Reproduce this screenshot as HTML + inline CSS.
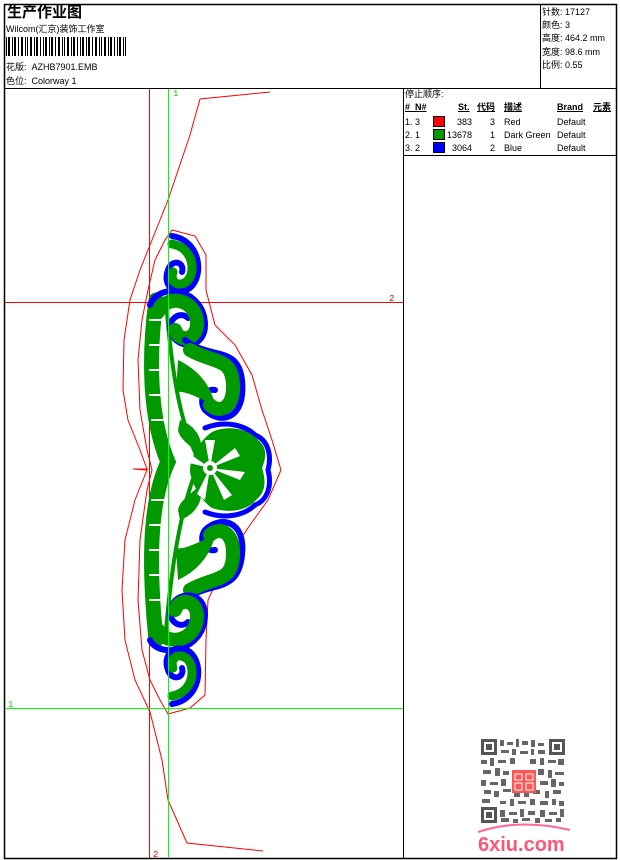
<!DOCTYPE html>
<html><head><meta charset="utf-8"><style>
body{margin:0;width:620px;height:860px;background:#fff;position:relative;overflow:hidden;font-family:"Liberation Sans","Noto Sans CJK SC",sans-serif;color:#000}
.t{position:absolute;font-size:9px;white-space:nowrap;line-height:11px}
svg{position:absolute;left:0;top:0}
</style></head><body>
<svg width="620" height="860" viewBox="0 0 620 860">
<rect x="4.5" y="4.5" width="612" height="854" fill="none" stroke="#000" stroke-width="1.5"/>
<line x1="4" y1="88.5" x2="617" y2="88.5" stroke="#000"/>
<line x1="540.5" y1="4" x2="540.5" y2="88" stroke="#000"/>
<line x1="403.5" y1="88" x2="403.5" y2="859" stroke="#000"/>
<line x1="403" y1="155.5" x2="617" y2="155.5" stroke="#000"/>
<g fill="#000">
<rect x="6" y="37" width="1" height="19"/><rect x="8" y="37" width="2" height="19"/><rect x="12" y="37" width="1" height="19"/><rect x="14" y="37" width="2" height="19"/><rect x="18" y="37" width="1" height="19"/><rect x="21" y="37" width="2" height="19"/><rect x="25" y="37" width="1" height="19"/><rect x="27" y="37" width="1" height="19"/><rect x="30" y="37" width="2" height="19"/><rect x="34" y="37" width="1" height="19"/><rect x="36" y="37" width="2" height="19"/><rect x="40" y="37" width="1" height="19"/><rect x="43" y="37" width="1" height="19"/><rect x="45" y="37" width="2" height="19"/><rect x="49" y="37" width="1" height="19"/><rect x="51" y="37" width="2" height="19"/><rect x="55" y="37" width="1" height="19"/><rect x="58" y="37" width="2" height="19"/><rect x="62" y="37" width="1" height="19"/><rect x="64" y="37" width="1" height="19"/><rect x="67" y="37" width="2" height="19"/><rect x="71" y="37" width="1" height="19"/><rect x="73" y="37" width="2" height="19"/><rect x="77" y="37" width="1" height="19"/><rect x="80" y="37" width="1" height="19"/><rect x="82" y="37" width="2" height="19"/><rect x="86" y="37" width="1" height="19"/><rect x="88" y="37" width="2" height="19"/><rect x="92" y="37" width="1" height="19"/><rect x="95" y="37" width="2" height="19"/><rect x="99" y="37" width="1" height="19"/><rect x="101" y="37" width="1" height="19"/><rect x="104" y="37" width="2" height="19"/><rect x="108" y="37" width="1" height="19"/><rect x="110" y="37" width="2" height="19"/><rect x="114" y="37" width="1" height="19"/><rect x="117" y="37" width="1" height="19"/><rect x="119" y="37" width="2" height="19"/><rect x="123" y="37" width="1" height="19"/><rect x="125" y="37" width="1" height="19"/>
</g>
<line x1="149.5" y1="89" x2="149.5" y2="858" stroke="#f00"/>
<line x1="5" y1="302.5" x2="403" y2="302.5" stroke="#f00"/>
<polyline fill="none" stroke="#f00" stroke-width="1" points="270,92 200,99 190,135 168,200 150,245 140,270 130,300 124,340 123,390 128,420 140,450 147,469 133,469 147,470 135,500 125,540 122,590 125,640 135,680 150,712 162,760 168,800 187,843 225,847 263,851"/>
<polyline fill="none" stroke="#f00" stroke-width="1" points="172,230 195,236 206,255 206,290 215,325 235,345 252,375 262,410 272,440 281,470 268,500 250,525 230,555 215,585 208,600 206,640 205,695 190,708 168,714 160,700 150,680 142,650 138,600 140,540 147,490 152,470 147,450 140,410 138,360 142,320 148,290 155,260 165,240 172,230"/>
<g fill="none" stroke-linecap="round">
<path d="M156,300 C148,360 150,420 168,462 C150,500 148,560 156,640" stroke="#090" stroke-width="15"/>
<path d="M150,320 L162,320 L162,330 M150,345 L162,345 L162,355 M150,370 L162,370 L162,380 M150,395 L164,395 L164,405 M152,420 L166,420 M152,500 L166,500 M150,525 L162,525 L162,535 M150,550 L162,550 L162,560 M150,575 L162,575 L162,585 M150,600 L162,600 L162,610" stroke="#fff" stroke-width="2"/>
<path d="M166,300 C172,380 182,430 200,462 C182,500 172,560 166,630" stroke="#090" stroke-width="4"/>
<path d="M172,236 C200,240 205,275 190,288 C175,298 162,285 168,270 C172,258 185,262 182,272" stroke="#00f" stroke-width="6"/>
<path d="M172,244 C195,248 196,275 186,282 C176,288 170,280 173,272" stroke="#090" stroke-width="9"/>
<path d="M150,305 C160,280 205,290 205,325 C205,348 180,350 172,335 C165,320 180,310 188,318" stroke="#00f" stroke-width="6"/>
<path d="M158,312 C168,292 198,300 197,325 C196,340 180,343 175,330" stroke="#090" stroke-width="14"/>
<path d="M185,340 C210,360 238,345 242,380 C246,420 220,425 205,410 C198,400 205,388 215,390" stroke="#00f" stroke-width="6"/>
<path d="M190,350 C215,364 232,357 233,385 C234,410 218,413 210,405" stroke="#090" stroke-width="14"/>
<path d="M185,600 C210,580 238,595 242,555 C246,520 220,515 205,530 C198,540 205,552 215,550" stroke="#00f" stroke-width="6"/>
<path d="M190,590 C215,576 232,583 233,555 C234,530 218,527 210,535" stroke="#090" stroke-width="14"/>
<path d="M150,640 C160,660 205,650 205,615 C205,592 180,590 172,605 C165,620 180,630 188,622" stroke="#00f" stroke-width="6"/>
<path d="M158,630 C168,648 198,640 197,615 C196,600 180,597 175,610" stroke="#090" stroke-width="14"/>
<path d="M172,704 C200,700 205,665 190,652 C175,642 162,655 168,670 C172,682 185,678 182,668" stroke="#00f" stroke-width="6"/>
<path d="M172,696 C195,692 196,665 186,658 C176,652 170,660 173,668" stroke="#090" stroke-width="9"/>
<path d="M205,428 C225,420 245,425 255,435 C268,440 272,455 268,470 C272,485 268,500 255,505 C245,515 225,520 205,512" stroke="#00f" stroke-width="5"/>
</g>
<line x1="168.5" y1="89" x2="168.5" y2="858" stroke="#0f0"/>
<line x1="5" y1="708.5" x2="403" y2="708.5" stroke="#0f0"/>
<text x="173" y="96" font-size="9" fill="#0c0" font-family="Liberation Mono">1</text>
<text x="8" y="707" font-size="9" fill="#0c0" font-family="Liberation Mono">1</text>
<text x="389" y="301" font-size="9" fill="#d00" font-family="Liberation Mono">2</text>
<text x="153" y="857" font-size="9" fill="#d00" font-family="Liberation Mono">2</text>
<g fill="#090">
<path d="M212,432 C230,424 250,430 258,440 C268,448 266,458 262,468 C266,480 266,492 256,500 C248,510 230,514 212,508 C200,500 190,480 190,470 C190,458 200,440 212,432 Z"/>
<path d="M178,360 C195,368 210,382 215,405 C198,398 185,390 176,392 Z"/>
<path d="M178,580 C195,572 210,558 215,535 C198,542 185,550 176,548 Z"/>
<path d="M180,420 C195,425 205,440 200,455 C190,445 180,440 178,430 Z"/>
<path d="M180,520 C195,515 205,500 200,485 C190,495 180,500 178,510 Z"/>
</g>
<g fill="#fff">
<path d="M210,468 L205,440 L215,440 Z M210,468 L235,448 L240,456 Z M210,468 L245,472 L240,480 Z M210,468 L232,495 L224,500 Z M210,468 L205,500 L197,494 Z M210,468 L185,462 L190,454 Z"/>
<circle cx="210" cy="468" r="7"/>
</g>
<circle cx="210" cy="468" r="3" fill="#090"/>
<g fill="#555">
<rect x="481" y="739" width="16" height="16"/><rect x="549" y="739" width="16" height="16"/><rect x="481" y="807" width="16" height="16"/>
</g>
<g fill="#fff"><rect x="484" y="742" width="10" height="10"/><rect x="552" y="742" width="10" height="10"/><rect x="484" y="810" width="10" height="10"/></g>
<g fill="#555"><rect x="486" y="744" width="6" height="6"/><rect x="554" y="744" width="6" height="6"/><rect x="486" y="812" width="6" height="6"/></g>
<g fill="#666">
<rect x="500" y="740" width="4" height="6"/><rect x="507" y="742" width="6" height="3"/><rect x="516" y="739" width="3" height="8"/><rect x="522" y="741" width="6" height="4"/><rect x="531" y="740" width="4" height="7"/><rect x="538" y="743" width="6" height="3"/>
<rect x="501" y="750" width="8" height="3"/><rect x="512" y="749" width="4" height="6"/><rect x="520" y="751" width="8" height="3"/><rect x="531" y="749" width="3" height="6"/><rect x="538" y="750" width="7" height="4"/>
<rect x="481" y="760" width="6" height="4"/><rect x="490" y="758" width="4" height="8"/><rect x="498" y="760" width="8" height="3"/><rect x="510" y="758" width="5" height="6"/><rect x="530" y="759" width="6" height="5"/><rect x="540" y="758" width="4" height="7"/><rect x="548" y="760" width="8" height="3"/><rect x="558" y="759" width="6" height="6"/>
<rect x="483" y="770" width="8" height="4"/><rect x="495" y="768" width="5" height="8"/><rect x="503" y="771" width="6" height="4"/><rect x="538" y="769" width="6" height="6"/><rect x="548" y="770" width="4" height="8"/><rect x="555" y="772" width="9" height="3"/>
<rect x="481" y="780" width="5" height="6"/><rect x="490" y="782" width="8" height="3"/><rect x="501" y="779" width="5" height="7"/><rect x="540" y="781" width="8" height="4"/><rect x="551" y="779" width="5" height="8"/><rect x="559" y="782" width="5" height="4"/>
<rect x="484" y="790" width="7" height="4"/><rect x="494" y="791" width="5" height="6"/><rect x="503" y="789" width="8" height="3"/><rect x="514" y="793" width="6" height="4"/><rect x="524" y="792" width="5" height="5"/><rect x="533" y="790" width="7" height="4"/><rect x="545" y="791" width="4" height="7"/><rect x="553" y="790" width="8" height="4"/>
<rect x="482" y="799" width="8" height="4"/><rect x="500" y="801" width="6" height="3"/><rect x="510" y="799" width="4" height="7"/><rect x="518" y="801" width="8" height="3"/><rect x="530" y="799" width="5" height="6"/><rect x="540" y="801" width="8" height="4"/><rect x="552" y="799" width="4" height="6"/><rect x="559" y="801" width="5" height="5"/>
<rect x="500" y="810" width="5" height="7"/><rect x="509" y="812" width="8" height="3"/><rect x="520" y="809" width="4" height="8"/><rect x="528" y="811" width="7" height="4"/><rect x="540" y="810" width="5" height="7"/><rect x="549" y="812" width="8" height="3"/><rect x="560" y="809" width="4" height="8"/>
<rect x="501" y="818" width="8" height="4"/><rect x="513" y="819" width="5" height="4"/><rect x="522" y="818" width="8" height="3"/><rect x="535" y="818" width="5" height="5"/><rect x="545" y="819" width="7" height="3"/><rect x="556" y="818" width="5" height="4"/>
</g>
<rect x="512" y="770" width="24" height="23" fill="#f55"/>
<g stroke="#fff" stroke-width="1" fill="none"><path d="M515,774 h7 v6 h-7z M526,774 h7 v6 h-7z M515,783 h7 v7 h-7z M526,783 h7 v7 h-7z"/></g>
<path d="M478,832 Q520,818 570,830" fill="none" stroke="#f69" stroke-width="2"/>
<text x="478" y="851" font-size="20" font-weight="bold" fill="#f57" font-family="Liberation Sans">6xiu.com</text>
</svg>
<div class="t" style="left:7px;top:4px;font-size:15px;line-height:17px;font-weight:bold">生产作业图</div>
<div class="t" style="left:6px;top:24px">Wilcom(汇京)装饰工作室</div>
<div class="t" style="left:6px;top:62px">花版:&nbsp; AZHB7901.EMB</div>
<div class="t" style="left:6px;top:76px">色位:&nbsp; Colorway 1</div>
<div class="t" style="left:542px;top:6px;line-height:13.2px">针数: 17127<br>颜色: 3<br>高度: 464.2 mm<br>宽度: 98.6 mm<br>比例: 0.55</div>
<div class="t" style="left:405px;top:89px">停止顺序:</div>
<div class="t" style="left:405px;top:102px;font-weight:bold;text-decoration:underline">#&nbsp;&nbsp;N#</div>
<div class="t" style="left:458px;top:102px;font-weight:bold;text-decoration:underline">St.</div>
<div class="t" style="left:477px;top:102px;font-weight:bold;text-decoration:underline">代码</div>
<div class="t" style="left:504px;top:102px;font-weight:bold;text-decoration:underline">描述</div>
<div class="t" style="left:557px;top:102px;font-weight:bold;text-decoration:underline">Brand</div>
<div class="t" style="left:593px;top:102px;font-weight:bold;text-decoration:underline">元素</div>
<div style="position:absolute;left:433px;top:116px;width:10px;height:9px;background:#f00;border:1px solid #000"></div>
<div style="position:absolute;left:433px;top:129px;width:10px;height:9px;background:#090;border:1px solid #000"></div>
<div style="position:absolute;left:433px;top:142px;width:10px;height:9px;background:#00f;border:1px solid #000"></div>
<div class="t" style="left:405px;top:116px;line-height:13px">1. 3<br>2. 1<br>3. 2</div>
<div class="t" style="left:444px;top:116px;width:28px;text-align:right;line-height:13px">383<br>13678<br>3064</div>
<div class="t" style="left:490px;top:116px;line-height:13px">3<br>1<br>2</div>
<div class="t" style="left:504px;top:116px;line-height:13px">Red<br>Dark Green<br>Blue</div>
<div class="t" style="left:557px;top:116px;line-height:13px">Default<br>Default<br>Default</div>
</body></html>
